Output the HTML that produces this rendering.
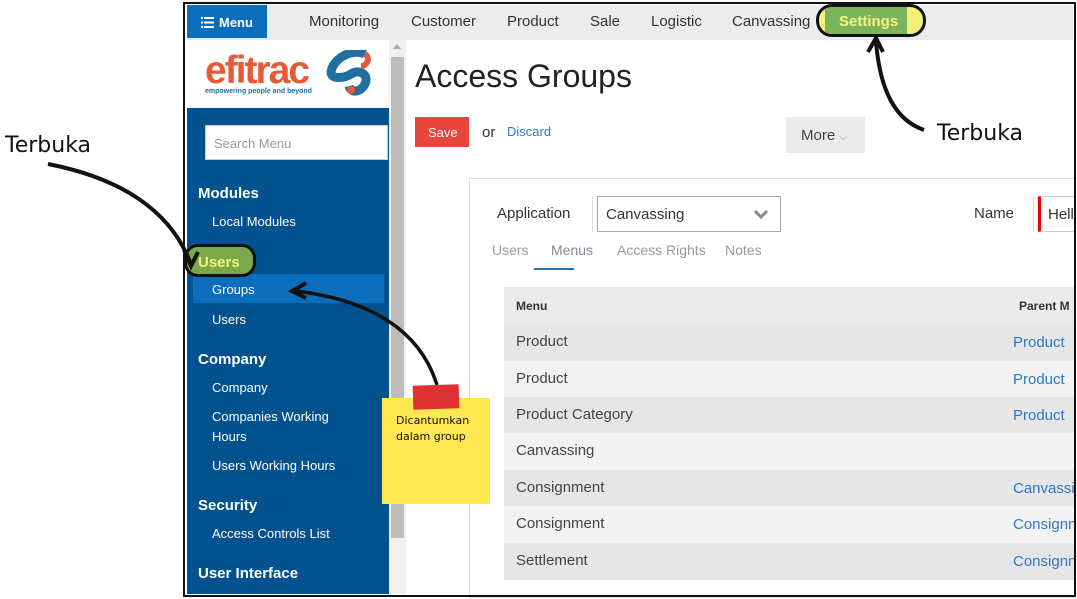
<!DOCTYPE html>
<html><head><meta charset="utf-8"><style>
*{margin:0;padding:0;box-sizing:border-box}
body{width:1077px;height:599px;background:#fff;position:relative;overflow:hidden;font-family:"Liberation Sans",sans-serif;color:#333}
.a{position:absolute;white-space:nowrap}
.nav{font-size:15px;color:#333;top:13px}
.sb{color:#fff;font-size:13px}
.sh{color:#fff;font-size:15px;font-weight:bold}
.row{position:absolute;left:504px;width:570px;height:37px}
.row span{position:absolute;left:12px;top:9px;font-size:15px;color:#444}
.row b{position:absolute;left:509px;top:10px;font-size:15px;color:#2d78c4;font-weight:normal}
.hand{font-family:"DejaVu Sans",sans-serif}
</style></head><body>
<!-- top bar -->
<div class="a" style="left:187px;top:5px;width:886px;height:35px;background:#ececec"></div>
<div class="a" style="left:187px;top:5px;width:80px;height:33px;background:#0a6ebd;color:#fff;font-weight:bold;font-size:13px;padding:10px 0 0 14px">
<svg width="13" height="11" style="vertical-align:-1px;margin-right:5px"><g fill="#fff"><rect x="0" y="0" width="2" height="2"/><rect x="3" y="0" width="10" height="2"/><rect x="0" y="4.5" width="2" height="2"/><rect x="3" y="4.5" width="10" height="2"/><rect x="0" y="9" width="2" height="2"/><rect x="3" y="9" width="10" height="2"/></g></svg>Menu</div>
<div class="a nav" style="left:309px">Monitoring</div>
<div class="a nav" style="left:411px">Customer</div>
<div class="a nav" style="left:507px">Product</div>
<div class="a nav" style="left:590px">Sale</div>
<div class="a nav" style="left:651px">Logistic</div>
<div class="a nav" style="left:732px">Canvassing</div>
<div class="a" style="left:816px;top:4px;width:110px;height:33px;border:3px solid #111;border-radius:16px;background:#f0f07a;overflow:hidden">
<div style="position:absolute;left:6px;top:0;width:82px;height:30px;background:#7bb35f"></div>
<div style="position:absolute;left:20px;top:6px;color:#f5f57a;font-weight:bold;font-size:15px">Settings</div></div>
<!-- sidebar -->
<div class="a" style="left:187px;top:40px;width:202px;height:68px;background:#fff">
<div class="a" style="left:18px;top:9px;font-size:39px;font-weight:bold;color:#e65a35;letter-spacing:-2px">efitrac</div>
<div class="a" style="left:18px;top:48px;font-size:7px;color:#1f6fa0;font-weight:bold">empowering people and beyond</div>
<svg class="a" style="left:138px;top:10px" width="48" height="46"><path d="M40 4 C28 -2 8 8 6 22 C6 30 20 28 26 24 C36 18 44 26 40 34 C36 42 26 44 24 36" fill="none" stroke="#1f6fa0" stroke-width="9"/><path d="M40 4 C46 8 42 16 36 16" stroke="#e65a35" stroke-width="6" fill="none"/><circle cx="26" cy="40" r="4" fill="#e65a35"/></svg>
</div>
<div class="a" style="left:187px;top:108px;width:202px;height:486px;background:#02528f"></div>
<div class="a" style="left:205px;top:125px;width:183px;height:35px;background:#fff;border:1px solid #ccc;font-size:13px;color:#999;padding:10px 0 0 8px">Search Menu</div>
<div class="a sh" style="left:198px;top:185px">Modules</div>
<div class="a sb" style="left:212px;top:214px">Local Modules</div>
<div class="a" style="left:193px;top:274px;width:191px;height:29px;background:#0a6ebd"></div>
<div class="a" style="left:184px;top:244px;width:72px;height:33px;border:3px solid #111;border-radius:14px;background:#7ba94a"></div>
<div class="a" style="left:198px;top:254px;color:#f2f27a;font-weight:bold;font-size:15px">Users</div>
<div class="a sb" style="left:212px;top:282px">Groups</div>
<div class="a sb" style="left:212px;top:312px">Users</div>
<div class="a sh" style="left:198px;top:351px">Company</div>
<div class="a sb" style="left:212px;top:380px">Company</div>
<div class="a sb" style="left:212px;top:409px">Companies Working</div>
<div class="a sb" style="left:212px;top:429px">Hours</div>
<div class="a sb" style="left:212px;top:458px">Users Working Hours</div>
<div class="a sh" style="left:198px;top:497px">Security</div>
<div class="a sb" style="left:212px;top:526px">Access Controls List</div>
<div class="a sh" style="left:198px;top:565px">User Interface</div>
<!-- scrollbar -->
<div class="a" style="left:389px;top:40px;width:17px;height:554px;background:#f0f0f0"></div>
<div class="a" style="left:391px;top:57px;width:13px;height:481px;background:#bdbdbd"></div>
<div class="a" style="left:393px;top:44px;width:0;height:0;border:4px solid transparent;border-bottom:5px solid #aaa;border-top:0"></div>
<!-- main -->
<div class="a" style="left:415px;top:58px;font-size:32px;font-weight:300;color:#222">Access Groups</div>
<div class="a" style="left:415px;top:117px;width:54px;height:30px;background:#e8453c;color:#fff;font-size:13px;padding:8px 0 0 13px">Save</div>
<div class="a" style="left:482px;top:124px;font-size:15px;color:#333">or</div>
<div class="a" style="left:507px;top:124px;font-size:13px;color:#2d78c4">Discard</div>
<div class="a" style="left:786px;top:117px;width:79px;height:36px;background:#ebebeb;font-size:15px;color:#444;padding:10px 0 0 15px">More <span style="font-size:10px;color:#888">&#9013;</span></div>
<div class="a" style="left:469px;top:178px;width:606px;height:420px;border:1px solid #ddd;border-right:0;background:#fff"></div>
<div class="a" style="left:497px;top:205px;font-size:15px;color:#333">Application</div>
<div class="a" style="left:592px;top:196px;width:1px;height:36px;background:#ddd"></div>
<div class="a" style="left:597px;top:196px;width:184px;height:36px;border:1px solid #aaa;font-size:15px;color:#333;padding:9px 0 0 8px">Canvassing</div>
<svg class="a" style="left:753px;top:209px" width="16" height="10"><path d="M2 2 L8 8 L14 2" stroke="#888" stroke-width="3" fill="none"/></svg>
<div class="a" style="left:974px;top:205px;font-size:15px;color:#333">Name</div>
<div class="a" style="left:1033px;top:196px;width:1px;height:36px;background:#ddd"></div>
<div class="a" style="left:1038px;top:196px;width:40px;height:36px;border:1px solid #ccc;border-left:3px solid #e00;font-size:15px;color:#333;padding:9px 0 0 7px">Hell</div>
<div class="a" style="left:492px;top:242px;font-size:14px;color:#999">Users</div>
<div class="a" style="left:551px;top:242px;font-size:14px;color:#889">Menus</div>
<div class="a" style="left:534px;top:268px;width:40px;height:2px;background:#2d6fb5"></div>
<div class="a" style="left:617px;top:242px;font-size:14px;color:#999">Access Rights</div>
<div class="a" style="left:725px;top:242px;font-size:14px;color:#999">Notes</div>
<div class="row" style="top:287px;background:#ebebeb;height:37px"><span style="font-size:12px;font-weight:bold;top:12px;color:#333">Menu</span><b style="font-size:12px;font-weight:bold;color:#333;left:515px;top:12px">Parent M</b></div>
<div class="row" style="top:324px;background:#e6e6e6"><span>Product</span><b>Product</b></div>
<div class="row" style="top:361px;background:#f2f2f2"><span>Product</span><b>Product</b></div>
<div class="row" style="top:397px;background:#e6e6e6"><span>Product Category</span><b>Product</b></div>
<div class="row" style="top:433px;background:#f2f2f2"><span>Canvassing</span></div>
<div class="row" style="top:470px;background:#e6e6e6"><span>Consignment</span><b>Canvassi</b></div>
<div class="row" style="top:506px;background:#f2f2f2"><span>Consignment</span><b>Consignn</b></div>
<div class="row" style="top:543px;background:#e6e6e6"><span>Settlement</span><b>Consignn</b></div>
<!-- frame -->
<div class="a" style="left:1075px;top:0;width:2px;height:599px;background:#fff"></div>
<div class="a" style="left:183px;top:2px;width:893px;height:595px;border:2px solid #111"></div>
<!-- annotations -->
<svg class="a" style="left:0;top:0" width="1077" height="599">
<path d="M48 164 C120 178 170 210 190 262" stroke="#111" stroke-width="4" fill="none"/>
<path d="M184 250 L191 266 L198 252" stroke="#111" stroke-width="4" fill="none"/>
<path d="M437 385 C420 330 370 300 296 291" stroke="#111" stroke-width="3.5" fill="none"/>
<path d="M306 283 L292 291 L306 298" stroke="#111" stroke-width="4" fill="none"/>
<path d="M924 130 C895 120 880 90 876 42" stroke="#111" stroke-width="4" fill="none"/>
<path d="M868 52 L876 38 L883 52" stroke="#111" stroke-width="4" fill="none"/>
</svg>
<div class="a hand" style="left:5px;top:133px;font-size:22px;color:#111">Terbuka</div>
<div class="a hand" style="left:937px;top:121px;font-size:22px;color:#111">Terbuka</div>
<div class="a" style="left:382px;top:398px;width:108px;height:106px;background:#ffe84f"></div>
<div class="a" style="left:413px;top:385px;width:46px;height:24px;background:#de3232;transform:rotate(-2deg)"></div>
<div class="a hand" style="left:396px;top:413px;font-size:11px;color:#111;line-height:16px">Dicantumkan<br>dalam group</div>
</body></html>
